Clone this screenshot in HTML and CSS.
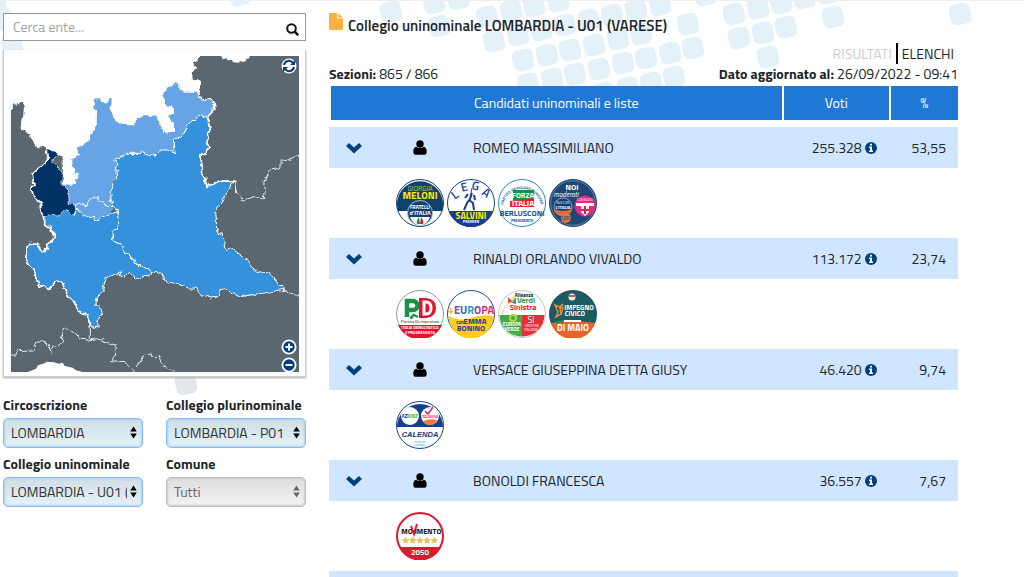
FILE: index.html
```html
<!DOCTYPE html>
<html lang="it">
<head>
<meta charset="utf-8">
<title>Collegio uninominale LOMBARDIA - U01 (VARESE)</title>
<meta name="viewport" content="width=device-width, initial-scale=1">
<link rel="stylesheet" href="styles.css">
</head>
<body>
<svg class="symbols" aria-hidden="true">
  <symbol id="tile" viewBox="0 0 26 26"><rect x="2.5" y="2.5" width="21" height="21" rx="6" transform="rotate(-12 13 13)"/></symbol>
  <symbol id="chevron" viewBox="0 0 18 12"><path d="M9 11.500 1 4l3-3L9 5.500 14 1l3 3z"/></symbol>
  <symbol id="person" viewBox="0 0 14 15"><circle cx="7" cy="4" r="3.700"/><path d="M3.300 6.800C1 7 .3 9.500.3 12c0 1.800.8 2.700 2.300 2.700h8.800c1.500 0 2.300-.9 2.300-2.700 0-2.500-.7-5-3-5.200C9.500 8.500 4.500 8.500 3.300 6.800z"/></symbol>
  <symbol id="info" viewBox="0 0 12 12"><circle cx="6" cy="6" r="6"/><path fill="#fff" d="M5 1.800h2v1.700H5zM4 4.500h3v4h1V10H4V8.500h1V6H4z"/></symbol>
  <symbol id="updown" viewBox="0 0 7 13"><path d="M3.500 0.500 6.800 5.500H.2zM3.500 12.500l3.300-5H.2z"/></symbol>
</svg>
<svg class="backdrop" width="1024" height="400" aria-hidden="true">
  <g fill="#e4f1f8">
    <use href="#tile" x="-17" y="-7" width="26" height="26"/><use href="#tile" x="-11" y="6" width="26" height="26"/><use href="#tile" x="-1" y="31" width="26" height="26"/><use href="#tile" x="227" y="-18" width="26" height="26"/>
    <use href="#tile" x="378" y="-1" width="26" height="26"/><use href="#tile" x="421" y="-10" width="26" height="26"/><use href="#tile" x="426" y="13" width="26" height="26"/><use href="#tile" x="445" y="-14" width="26" height="26"/>
    <use href="#tile" x="474" y="4" width="26" height="26"/><use href="#tile" x="498" y="-2" width="26" height="26"/><use href="#tile" x="521" y="-7" width="26" height="26"/><use href="#tile" x="545" y="-12" width="26" height="26"/>
    <use href="#tile" x="481" y="28" width="26" height="26"/><use href="#tile" x="505" y="22" width="26" height="26"/><use href="#tile" x="528" y="17" width="26" height="26"/><use href="#tile" x="552" y="12" width="26" height="26"/><use href="#tile" x="576" y="7" width="26" height="26"/><use href="#tile" x="599" y="2" width="26" height="26"/><use href="#tile" x="623" y="-3" width="26" height="26"/><use href="#tile" x="647" y="-8" width="26" height="26"/>
    <use href="#tile" x="510" y="47" width="26" height="26"/><use href="#tile" x="534" y="42" width="26" height="26"/><use href="#tile" x="557" y="37" width="26" height="26"/><use href="#tile" x="581" y="32" width="26" height="26"/><use href="#tile" x="605" y="26" width="26" height="26"/><use href="#tile" x="628" y="21" width="26" height="26"/><use href="#tile" x="675" y="11" width="26" height="26"/>
    <use href="#tile" x="515" y="71" width="26" height="26"/><use href="#tile" x="539" y="66" width="26" height="26"/><use href="#tile" x="562" y="61" width="26" height="26"/><use href="#tile" x="586" y="56" width="26" height="26"/><use href="#tile" x="610" y="50" width="26" height="26"/><use href="#tile" x="633" y="45" width="26" height="26"/><use href="#tile" x="657" y="40" width="26" height="26"/><use href="#tile" x="680" y="35" width="26" height="26"/>
    <use href="#tile" x="591" y="80" width="26" height="26"/><use href="#tile" x="615" y="75" width="26" height="26"/><use href="#tile" x="638" y="70" width="26" height="26"/><use href="#tile" x="661" y="64" width="26" height="26"/>
    <use href="#tile" x="692" y="-18" width="26" height="26"/><use href="#tile" x="721" y="1" width="26" height="26"/><use href="#tile" x="745" y="-5" width="26" height="26"/><use href="#tile" x="768" y="-10" width="26" height="26"/><use href="#tile" x="791" y="-15" width="26" height="26"/><use href="#tile" x="815" y="-20" width="26" height="26"/>
    <use href="#tile" x="726" y="25" width="26" height="26"/><use href="#tile" x="750" y="20" width="26" height="26"/><use href="#tile" x="773" y="14" width="26" height="26"/><use href="#tile" x="755" y="44" width="26" height="26"/><use href="#tile" x="820" y="4" width="26" height="26"/><use href="#tile" x="947" y="1" width="26" height="26"/>
  </g>
  <use href="#tile" x="173" y="371" width="26" height="26" fill="#e2e7ec"/>
</svg>

<div class="page">
  <aside class="sidebar">
    <form class="search" role="search">
      <input class="search-input" type="text" placeholder="Cerca ente..." aria-label="Cerca ente">
      <button class="search-button" type="button" aria-label="Cerca"><svg width="13" height="13" viewBox="0 0 13 13" fill="none" stroke="#111" stroke-width="2"><circle cx="5.500" cy="5.500" r="4.300"/><path d="m8.700 8.700 3.500 3.500" stroke-width="2.500"/></svg></button>
    </form>

    <div class="map-card">
      <svg class="map" viewBox="33 168 864 948" role="img" aria-label="Mappa dei collegi della Lombardia">
        <defs>
          <filter id="coast" x="-5%" y="-5%" width="110%" height="110%"><feTurbulence type="fractalNoise" baseFrequency="0.050" numOctaves="2" seed="4"/><feDisplacementMap in="SourceGraphic" scale="20" xChannelSelector="R" yChannelSelector="G"/></filter>
        </defs>
        <path fill="#5a6670" d="M33 168h864v948H33z"/>
        <path fill="#fff" d="M664 168l4 10 12-3 2 6 14-1 3 7 18 1 3-5 10 3 8-3 1-6 9-2v-7zM84 1116l24-10 6-10 20-6 6-5 22 2 14 4 12-3 6 10 24 5 10 8 20 5z"/>
        <g filter="url(#coast)" stroke-linejoin="round">
          <path fill="#fff" d="M0 120H596V168L592 184 585 190 584 206 576 212 574 234 580 240 592 236 600 244 600 275 590 300 520 420 250 580 190 570 188 480 140 448 130 443 108 441 106 432 88 412 84 400 66 390 64 372 70 346 72 322 67 318 67 309 54 310 52 316 40 317 33 324H0z"/>
          <path fill="#66a4e5" d="M535 247L538 250 538 272 555 278 590 278 597 294 634 299 642 308 641 330 633 336 622 350 600 346 575 365 550 403 522 418 518 458 480 452 450 465 410 460 380 462 345 482 352 500 348 540 338 545 335 570 338 625 340 645 320 655 290 662 240 648 228 640 225 615 207 605 206 590 192 575 186 552 222 555 226 552 232 530 237 522 222 520 217 500 217 474 234 470 238 458 233 443 245 436 264 424 276 402 290 377 291 328 278 321 287 315 285 300 300 297 305 304 318 306 331 296 333 343 345 352 350 364 366 375 402 376 405 354 425 350 445 348 468 346 474 362 485 384 496 402 508 394 522 392 522 372 508 360 508 350 522 342 522 322 508 318 492 315 491 280 505 260 520 255z"/>
          <path fill="#3491dc" stroke="#fff" stroke-width="3" d="M340 482L380 460 432 460 445 466 470 460 480 450 505 450 522 458 520 418 550 402 555 385 582 360 600 346 622 352 632 385 622 405 628 440 618 458 602 462 608 520 616 528 620 560 665 543 703 543 683 575 647 635 651 700 670 703 674 752 695 745 745 782 760 812 800 818 860 870 795 878 720 890 680 868 660 872 655 888 632 897 600 884 590 868 560 862 530 850 500 850 485 825 470 812 455 820 430 806 415 790 375 758 370 735 335 720 338 700 356 672 352 635 338 615 334 600 333 580 340 548 350 535 348 515 354 495z"/>
          <path fill="#3491dc" stroke="#fff" stroke-width="3" d="M133 650L155 640 185 640 200 622 215 642 230 640 230 628 242 630 243 640 290 660 335 640 350 636 357 670 335 705 335 720 370 737 375 758 430 806 450 812 452 828 430 826 410 838 385 820 370 838 358 815 345 824 320 832 305 875 290 895 288 915 305 925 306 935 288 960 298 972 296 984 275 980 268 960 265 945 230 932 225 910 205 890 188 850 165 846 150 865 118 860 108 825 92 800 80 785 82 735 92 728 110 730 125 752 135 755 145 728 166 715 150 680 134 672z"/>
          <path fill="none" stroke="#fff" stroke-width="3" d="M228 612L246 608 262 620 270 598 280 590 284 598 290 586 296 606 312 606 318 618 338 620M228 612V630"/>
          <path fill="#036" stroke="#fff" stroke-width="2" d="M140 449L172 455 172 465 153 486 167 490 180 505 187 520 185 540 187 552 205 575 208 612 225 612 225 643 212 645 200 628 190 640 170 648 150 645 133 650 118 620 118 605 100 590 96 568 102 550 96 524 143 480z"/>
          <path fill="none" stroke="#fff" stroke-width="5" d="M137 452L143 480 96 524 102 550 96 568 100 590 120 605 125 640 134 650 134 676 155 690 166 715 145 728 135 755 125 752 110 730 92 728 82 735 80 785 92 800 108 825 118 860 150 865 165 846 188 850 205 890 225 910 230 932 265 945 268 985M597 280V294L634 299 642 312 640 330 622 348 632 385 622 405 628 440 618 458 602 462 608 520 616 528 620 560 665 543 703 543"/>
          <path fill="none" stroke="#e8edf0" stroke-width="3" d="M703 543L709 552 710 585 730 600 765 590 790 594 795 550 808 510 840 505 840 484 865 480 890 467 910 478M20 1065H45L48 1052 98 1050 108 1026 138 1026 152 1060 160 1035 185 1032 185 1005 195 986 215 990 240 1018 268 1020 290 1016 345 1035 347 1070 332 1085 375 1088 405 1118M268 985V1020M405 1104L435 1066 475 1066 490 1100 540 1120M860 870L870 884 910 880"/>
        </g>
      </svg>
      <button class="map-button map-reset" type="button" aria-label="Ripristina"><svg viewBox="0 0 16 16"><circle cx="8" cy="8" r="7.500" fill="#fff"/><path fill="none" stroke="#004080" stroke-width="2" d="M3 7a5 5 0 0 1 9-2M13 9a5 5 0 0 1-9 2"/><path fill="#004080" d="M14 2v5H9zM2 14V9h5z"/></svg></button>
      <div class="map-zoom">
        <button class="map-button" type="button" aria-label="Ingrandisci"><svg viewBox="0 0 16 16"><circle cx="8" cy="8" r="7.500" fill="#fff"/><circle cx="8" cy="8" r="5.700" fill="#004080"/><path stroke="#fff" stroke-width="2" d="M4.500 8h7M8 4.500v7"/></svg></button>
        <button class="map-button" type="button" aria-label="Riduci"><svg viewBox="0 0 16 16"><circle cx="8" cy="8" r="7.500" fill="#fff"/><circle cx="8" cy="8" r="5.700" fill="#004080"/><path stroke="#fff" stroke-width="2" d="M4.500 8h7"/></svg></button>
      </div>
    </div>

    <form class="filters">
      <div class="field"><label for="circ">Circoscrizione</label><div class="select-wrap"><select id="circ"><option>LOMBARDIA</option></select><svg class="arrows" aria-hidden="true"><use href="#updown"/></svg></div></div>
      <div class="field"><label for="pluri">Collegio plurinominale</label><div class="select-wrap"><select id="pluri"><option>LOMBARDIA - P01</option></select><svg class="arrows" aria-hidden="true"><use href="#updown"/></svg></div></div>
      <div class="field"><label for="uni">Collegio uninominale</label><div class="select-wrap"><select id="uni"><option>LOMBARDIA - U01 (VARESE)</option></select><svg class="arrows" aria-hidden="true"><use href="#updown"/></svg></div></div>
      <div class="field"><label for="comune">Comune</label><div class="select-wrap muted"><select id="comune"><option>Tutti</option></select><svg class="arrows" aria-hidden="true"><use href="#updown"/></svg></div></div>
    </form>
  </aside>

  <main class="results">
    <h1 class="title"><svg class="file-icon" width="14" height="17" viewBox="0 0 14 17" aria-hidden="true"><path fill="#f9b142" d="M1 0h7v5.500h6V16a1 1 0 0 1-1 1H1a1 1 0 0 1-1-1V1a1 1 0 0 1 1-1zM9.200.3 13.700 4.500H9.200z"/></svg>Collegio uninominale LOMBARDIA - U01 (VARESE)</h1>
    <nav class="tabs"><a class="tab" href="#risultati">RISULTATI</a><a class="tab active" href="#elenchi">ELENCHI</a></nav>
    <div class="meta"><span><b>Sezioni:</b> 865 / 866</span><span><b>Dato aggiornato al:</b> 26/09/2022 - 09:41</span></div>
    <table class="table">
      <colgroup><col class="c-toggle"><col class="c-icon"><col class="c-name"><col class="c-votes"><col class="c-pct"></colgroup>
      <thead><tr><th class="name" colspan="3">Candidati uninominali e liste</th><th>Voti</th><th>%</th></tr></thead>
      <tbody>
        <tr class="candidate"><td><button class="toggle" type="button" aria-label="Mostra liste"><svg width="18" height="12"><use href="#chevron"/></svg></button></td><td class="center"><svg width="14" height="15"><use href="#person"/></svg></td><td>ROMEO MASSIMILIANO</td><td class="num">255.328 <svg class="info" width="12" height="12"><use href="#info"/></svg></td><td class="num">53,55</td></tr>
        <tr class="lists"><td></td><td colspan="4"><div class="logos">
          <svg viewBox="0 0 48 48" role="img" aria-label="Fratelli d'Italia"><circle cx="24" cy="24" r="23.500" fill="#fff" stroke="#12406c"/><path fill="#12406c" d="M2 32a23 23 0 1 1 44 0z"/><text x="24" y="12" font-size="7" fill="#c7c94c">GIORGIA</text><text x="24" y="20" font-size="10" font-weight="700" fill="#ffed00">MELONI</text><circle cx="24" cy="34" r="12.500" fill="#12406c" stroke="#9fc3dc"/><text x="24" y="30" font-size="5" font-weight="700" fill="#fff">FRATELLI</text><text x="24" y="36" font-size="6" font-weight="700" fill="#fff">d'ITALIA</text><path fill="#fff" d="M14 38h20q-2 7-10 8.500Q16 45 14 38z"/><path fill="#159447" d="M23 38q-3 4-2 7h3z"/><path fill="#e3182d" d="M25 38q3 4 2 7h-3z"/></svg>
          <svg viewBox="0 0 48 48" role="img" aria-label="Lega Salvini Premier"><circle cx="24" cy="24" r="23.500" fill="#fff" stroke="#1a3d92"/><path fill="#1a3d92" d="M2 32h44a23 23 0 0 1-44 0z"/><g fill="#1a3d92" font-size="12" font-weight="600"><text x="10" y="19" transform="rotate(-35 10 19)">L</text><text x="18" y="12" transform="rotate(-12 18 12)">E</text><text x="28" y="11" transform="rotate(10 28 11)">G</text><text x="37" y="17" transform="rotate(35 37 17)">A</text></g><path fill="none" stroke="#1a3d92" stroke-width="2" d="M25 14l-2 6-3 4-3 7M22 21l4 3 1 7M21 15l-3 4M27 16l1 5"/><path stroke="#1a3d92" d="m25 9-2 10"/><text x="24" y="40" font-size="9" font-weight="700" fill="#ffed00">SALVINI</text><text x="24" y="44" font-size="4" font-weight="700" fill="#fff">PREMIER</text></svg>
          <svg viewBox="0 0 48 48" role="img" aria-label="Forza Italia"><circle cx="24" cy="24" r="23.500" fill="#fff" stroke="#3189b8"/><path id="ring" fill="none" d="M5 29a19 19 0 1 1 38 0"/><text font-size="4" font-weight="700" fill="#1c6eaa"><textPath href="#ring" startOffset="50%">PARTITO POPOLARE EUROPEO</textPath></text><path fill="#139348" d="M15 11h21v9l-21 2z"/><path fill="#e12835" d="M12 22l24-3v9H12z"/><text x="25" y="18.500" font-size="7.500" font-weight="700" fill="#fff">FORZA</text><text x="25" y="26.500" font-size="8" font-weight="700" fill="#fff">ITALIA</text><text x="24" y="37" font-size="8" font-weight="700" fill="#174f91">BERLUSCONI</text><text x="24" y="43" font-size="4" font-weight="700" fill="#174f91">PRESIDENTE</text></svg>
          <svg viewBox="0 0 48 48" role="img" aria-label="Noi moderati"><circle cx="24" cy="24" r="23.500" fill="#1c4777" stroke="#1c4777"/><circle cx="24" cy="24" r="22.300" fill="none" stroke="#91a7bf" stroke-width=".6"/><text x="23" y="11" font-size="8" font-weight="700" fill="#fff">NOI</text><text x="17" y="18" font-size="7" fill="#fff" font-style="italic">moderati</text><circle cx="14" cy="28" r="9" fill="#153f70" stroke="#b8cada" stroke-width=".7"/><text x="14" y="25" font-size="3.500" fill="#fff">NOI CON</text><text x="14" y="30" font-size="4.500" font-weight="700" fill="#fff">L'ITALIA</text><path fill="#e66b32" d="M5 30q9 4 18 0-1 7-9 7t-9-7z"/><circle cx="36" cy="27" r="10.500" fill="#e62983"/><text x="36" y="22" font-size="3.500" fill="#fff">CORAGGIO</text><path fill="#fff" d="M27 24h18v3H27zM32 27h8v6l-4 4-4-4z"/><path stroke="#dc2638" stroke-width="2" d="M36 27v8M32 31h8"/><circle cx="17" cy="39" r="5" fill="#ee7137"/><text x="17" y="41" font-size="5" font-weight="700" fill="#275c95">UDC</text></svg>
        </div></td></tr>
        <tr class="candidate"><td><button class="toggle" type="button" aria-label="Mostra liste"><svg width="18" height="12"><use href="#chevron"/></svg></button></td><td class="center"><svg width="14" height="15"><use href="#person"/></svg></td><td>RINALDI ORLANDO VIVALDO</td><td class="num">113.172 <svg class="info" width="12" height="12"><use href="#info"/></svg></td><td class="num">23,74</td></tr>
        <tr class="lists"><td></td><td colspan="4"><div class="logos">
          <svg viewBox="0 0 48 48" role="img" aria-label="Partito Democratico"><circle cx="24" cy="24" r="23.500" fill="#fff" stroke="#9a9a9a"/><path fill="#e2142d" d="M2 35h44a24 24 0 0 1-44 0z"/><path fill="none" stroke="#159447" stroke-width="4.500" d="M11 27V11h6a4 4 0 0 1 0 9h-5"/><path fill="#e2142d" d="M23 8h7q10 1 10 10t-10 10h-7z"/><path fill="none" stroke="#fff" stroke-width="3" d="M28 12v12h2q5 0 5-6t-5-6z"/><path fill="none" stroke="#159447" stroke-width="2" d="m14 28 4-3 4 2M18 24l-3 5"/><text x="24" y="33" font-size="4.500" fill="#111">Partito Democratico</text><text x="24" y="39" font-size="4" font-weight="700" fill="#fff">ITALIA DEMOCRATICA</text><text x="24" y="43.500" font-size="4" font-weight="700" fill="#fff">E PROGRESSISTA</text></svg>
          <svg viewBox="0 0 48 48" role="img" aria-label="+Europa"><circle cx="24" cy="24" r="23.500" fill="#fff" stroke="#284b9f"/><path fill="#ffce1c" d="M1.500 26q12 6 22.500 2t22.500-2A22.500 22.500 0 0 1 1.500 26z"/><text x="24" y="24" font-size="11" font-weight="700" fill="#7650a1"><tspan fill="#f4b51a">+</tspan>E<tspan fill="#3461ae">U</tspan><tspan fill="#20a4bd">R</tspan>O<tspan fill="#e72878">P</tspan><tspan fill="#e72c4a">A</tspan></text><text x="13" y="34" font-size="5" font-weight="700" fill="#243f8e">con</text><text x="28" y="34" font-size="8" font-weight="700" fill="#243f8e">EMMA</text><text x="24" y="41" font-size="8" font-weight="700" fill="#243f8e">BONINO</text></svg>
          <svg viewBox="0 0 48 48" role="img" aria-label="Alleanza Verdi e Sinistra"><circle cx="24" cy="24" r="23.500" fill="#fff" stroke="#b5cdbd"/><path fill="#42ac49" d="M1.500 25H24v21.500A22 22 0 0 1 1.500 25z"/><path fill="#e2303b" d="M24 25h22.500A22 22 0 0 1 24 46.500z"/><text x="9" y="17" font-size="3.500" fill="#e8912e" transform="rotate(-58 9 17)">Reti Civiche</text><path fill="#ee4735" d="m10 7 5 5-5 1z"/><path fill="#fcb71b" d="m15 7-1 6 4-5z"/><path fill="#148ac7" d="m18 8-4 5 4 1z"/><text x="26" y="7" font-size="5" font-weight="700" fill="#111">Alleanza</text><text x="28" y="13" font-size="8" font-weight="700" fill="#2c9c3f">Verdi</text><text x="25" y="20" font-size="8" font-weight="700" fill="#dc2630">Sinistra</text><circle cx="15" cy="28" r="3" fill="none" stroke="#bad536" stroke-width="2"/><text x="14" y="36" font-size="5" font-weight="700" fill="#fff">EUROPA</text><text x="14" y="41" font-size="5" font-weight="700" fill="#fff">VERDE</text><text x="33" y="33" font-size="9" fill="#fff">SI</text><text x="34" y="37" font-size="3.500" fill="#fff">SINISTRA</text><text x="33" y="41" font-size="3.500" fill="#fff">ITALIANA</text></svg>
          <svg viewBox="0 0 48 48" role="img" aria-label="Impegno Civico Di Maio"><circle cx="24" cy="24" r="23.500" fill="#195c63" stroke="#284a69"/><path fill="#e8632a" d="M2 33q20-4 44 0a23 23 0 0 1-44 0z"/><path fill="#fff" d="M14 30h18v2H14z"/><path fill="#159447" d="M7 31l8-1v2l-8 2z"/><circle cx="23" cy="7" r="3.500" fill="#eee"/><path stroke="#df4f4b" stroke-width="2" d="M20 6h6"/><path fill="none" stroke="#ee8730" stroke-width="1.500" d="m6 15 4 2 4-3-3 5 1 5-5 3 2-5zM14 17l-2 8"/><text x="30" y="20" font-size="7" font-weight="700" fill="#fff">IMPEGNO</text><text x="26" y="26" font-size="7" font-weight="700" fill="#fff">CIVICO</text><text x="24" y="41" font-size="9" font-weight="700" fill="#fff">DI MAIO</text></svg>
        </div></td></tr>
        <tr class="candidate"><td><button class="toggle" type="button" aria-label="Mostra liste"><svg width="18" height="12"><use href="#chevron"/></svg></button></td><td class="center"><svg width="14" height="15"><use href="#person"/></svg></td><td>VERSACE GIUSEPPINA DETTA GIUSY</td><td class="num">46.420 <svg class="info" width="12" height="12"><use href="#info"/></svg></td><td class="num">9,74</td></tr>
        <tr class="lists"><td></td><td colspan="4"><div class="logos">
          <svg viewBox="0 0 48 48" role="img" aria-label="Azione - Italia Viva - Calenda"><circle cx="24" cy="24" r="23.500" fill="#fff" stroke="#173f91"/><path fill="#173f91" d="M1 26a23 23 0 1 1 46 0z"/><circle cx="14" cy="15" r="9" fill="#fff"/><circle cx="34" cy="15" r="9" fill="#fff"/><text x="14" y="17" font-size="5" font-weight="700" fill="#173f91">AZI<tspan fill="#66b332">ONE</tspan></text><path fill="none" stroke="#e32b4b" stroke-width="1.500" d="m29 10 3 3 5-7"/><text x="34" y="17" font-size="3.500" font-weight="700" fill="#d92e85">ITALIAVIVA</text><path fill="#ee7c34" d="M27 20q7-3 14-1-2 5-7 5t-7-4z"/><text class="wide" x="24" y="36" font-size="7.500" font-weight="700" font-style="italic" fill="#123979">CALENDA</text><text x="24" y="42" font-size="4" fill="#209fc9">renew</text><text x="24" y="45" font-size="4" fill="#209fc9">europe.</text></svg>
        </div></td></tr>
        <tr class="candidate"><td><button class="toggle" type="button" aria-label="Mostra liste"><svg width="18" height="12"><use href="#chevron"/></svg></button></td><td class="center"><svg width="14" height="15"><use href="#person"/></svg></td><td>BONOLDI FRANCESCA</td><td class="num">36.557 <svg class="info" width="12" height="12"><use href="#info"/></svg></td><td class="num">7,67</td></tr>
        <tr class="lists"><td></td><td colspan="4"><div class="logos">
          <svg viewBox="0 0 48 48" role="img" aria-label="Movimento 5 Stelle 2050"><circle cx="24" cy="24" r="23" fill="#fff" stroke="#df182b" stroke-width="2"/><path fill="#df182b" d="M3 35h42a23 23 0 0 1-42 0z"/><text x="11" y="22" font-size="7.500" font-weight="700" fill="#111">MO</text><path fill="none" stroke="#df182b" stroke-width="2" d="m15 14 3 8 3-10"/><text x="32" y="22" font-size="7.500" font-weight="700" fill="#111">IMENTO</text><text class="wide" x="24" y="31" font-size="8" fill="#f9cc24" stroke="#b68c17" stroke-width=".3">★★★★★</text><text x="24" y="43" font-size="8" font-weight="700" fill="#fff">2050</text></svg>
        </div></td></tr>
        <tr class="candidate"><td colspan="5"></td></tr>
      </tbody>
    </table>
  </main>
</div>
</body>
</html>
```
FILE: styles.css
```css
* { box-sizing: border-box; }
html { overflow: hidden; }
body {
  margin: 0;
  color: #212529;
  background: #fff;
  font: 14px/20px "Titillium Web", Roboto, sans-serif;
}
button, input, select { font: inherit; color: inherit; }
button { padding: 0; border: 0; background: none; cursor: pointer; }
svg { display: block; }
.symbols { position: absolute; width: 0; height: 0; }
.backdrop { position: absolute; top: 0; left: 0; z-index: -1; }
.page {
  display: grid;
  grid-template-columns: 303fr 629fr;
  gap: 23px;
  padding: 12px 66px 0 3px;
  border-top: 1px solid #eee;
}
.sidebar, .results { min-width: 0; }

.search {
  display: flex;
  align-items: center;
  height: 28px;
  border: 1px solid #999;
  background: #fff;
}
.search-input {
  flex: 1;
  min-width: 0;
  padding: 0 9px;
  border: 0;
  outline: 0;
  background: none;
}
.search-input::placeholder { color: #a3a3a3; }
.search-button { padding: 5px 6px 0; }

.map-card {
  position: relative;
  margin-top: 9px;
  padding: 6px 6px 4px 7px;
  border: 1px solid #ccc;
  border-top: 0;
  background: #fff;
  box-shadow: 0 1px 2px #aaa;
}
.map { width: 100%; height: auto; }
.map-button { width: 16px; height: 16px; }
.map-reset { position: absolute; top: 8px; right: 8px; }
.map-zoom {
  position: absolute;
  right: 8px;
  bottom: 3px;
  display: grid;
  gap: 2px;
}

.filters {
  display: grid;
  grid-template-columns: 1fr 1fr;
  gap: 6px 23px;
  margin-top: 18px;
}
.field { min-width: 0; }
.field label { display: block; margin-bottom: 3px; font-weight: 700; white-space: nowrap; }
.select-wrap { position: relative; }
.select-wrap select {
  display: block;
  width: 100%;
  height: 30px;
  padding: 0 15px 0 7px;
  border: 1px solid #80bdff;
  border-radius: 5px;
  appearance: none;
  color: #333;
  background: linear-gradient(#cfdde4, #e4f2f9);
  box-shadow: inset 0 0 2px 1px #b3d2ea;
}
.select-wrap.muted select {
  border-color: #bbb;
  color: #666;
  background: linear-gradient(#ddd, #f4f4f4);
  box-shadow: inset 0 0 2px 1px #ccc;
}
.arrows {
  position: absolute;
  top: 8px;
  right: 6px;
  width: 7px;
  height: 13px;
  pointer-events: none;
}
.muted .arrows { fill: #666; }

.title {
  display: flex;
  gap: 5px;
  margin: 0;
  font-size: 15px;
  font-weight: 600;
  line-height: 26px;
}
.tabs { display: flex; justify-content: flex-end; margin-top: 4px; line-height: 21px; }
.tab { padding: 0 4px; color: #ccc; text-decoration: none; }
.tab.active { border-left: 2px solid #000; color: #212529; }
.meta { display: flex; justify-content: space-between; margin-bottom: 2px; }

.table {
  width: 100%;
  table-layout: fixed;
  border-collapse: separate;
  border-spacing: 0;
}
.c-toggle { width: 8%; }
.c-icon { width: 13%; }
.c-name { width: 51%; }
.c-votes { width: 17%; }
.c-pct { width: 11%; }
.table th {
  height: 34px;
  padding: 0;
  border-left: 2px solid #fff;
  color: #fff;
  background: #1f78d6;
  font-weight: 400;
}
.table th.name { padding-left: 143px; text-align: left; }
.table tbody::before { content: ""; display: block; height: 7px; }
.table td { padding: 0 12px; }
.candidate td { height: 41px; background: #d0e5ff; }
.candidate .center svg { margin: 0 auto; }
.num { text-align: right; }
.info { display: inline-block; fill: #004080; vertical-align: -1px; }
.toggle { display: block; margin: 0 auto; fill: #004080; }
.lists td { height: 70px; }
.table .lists td:last-child { padding: 0 17px; }
.logos { display: flex; gap: 3px; }
.logos svg {
  width: 48px;
  height: 48px;
  font-family: "Titillium Web", "Liberation Sans", sans-serif;
  text-anchor: middle;
}
.logos .wide { font-family: "Liberation Sans", "DejaVu Sans", sans-serif; }
```
